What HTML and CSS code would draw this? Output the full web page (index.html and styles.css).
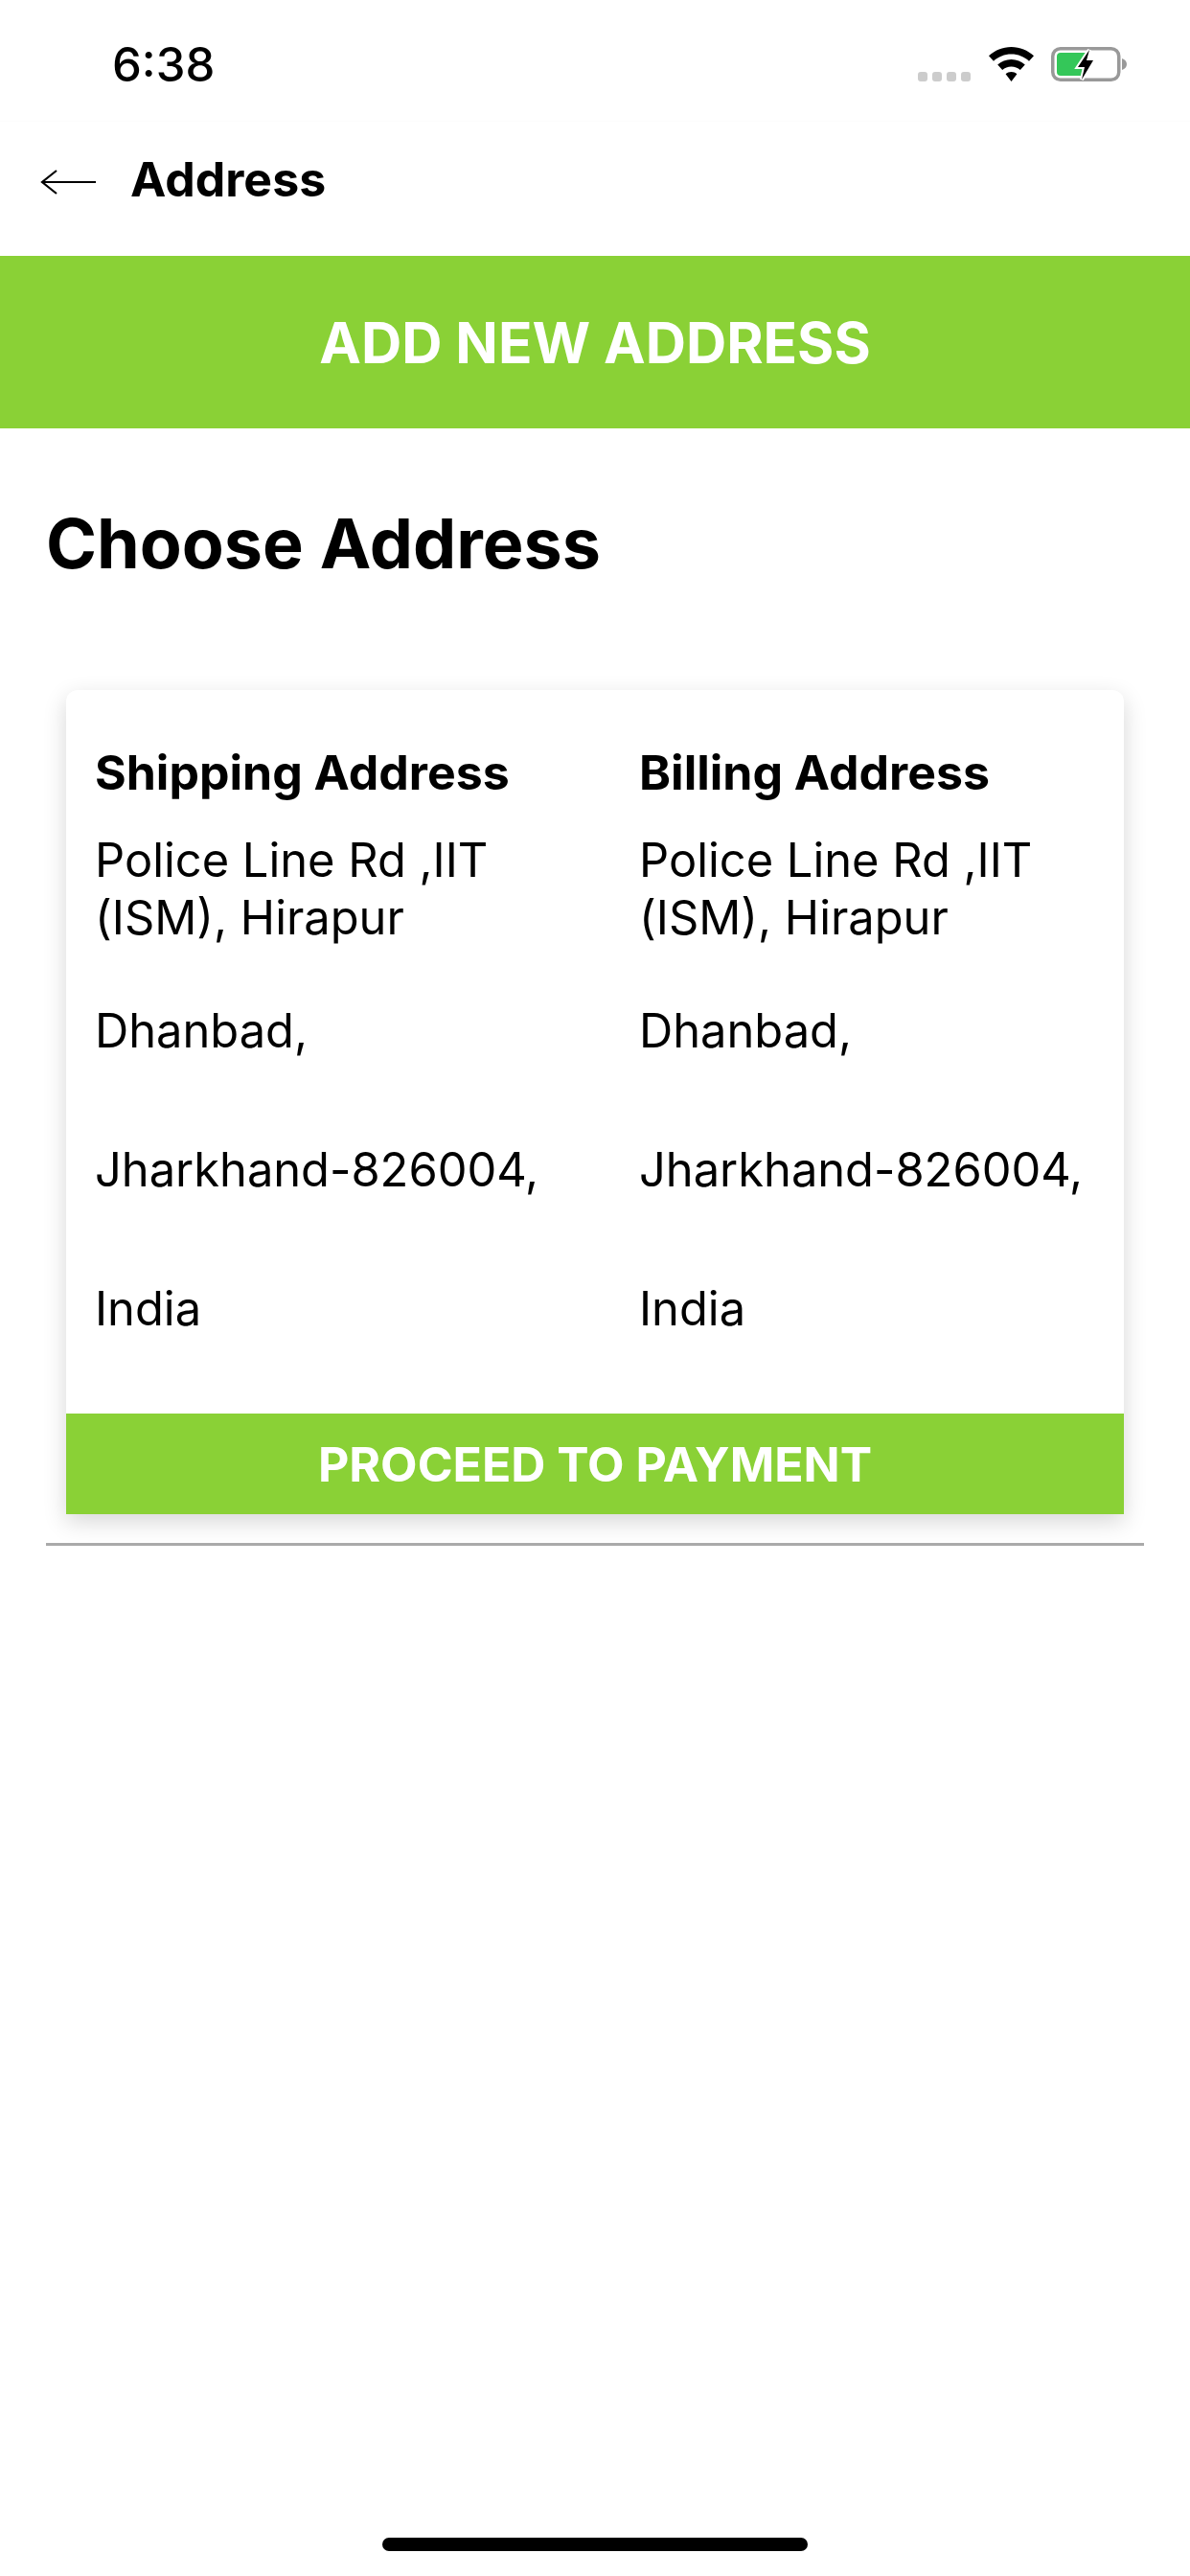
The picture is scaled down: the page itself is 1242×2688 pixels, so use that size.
FILE: index.html
```html
<!DOCTYPE html>
<html lang="en">
<head>
<meta charset="utf-8">
<title>Address</title>
<link rel="stylesheet" href="styles.css">
</head>
<body>
<div class="screen">
  <div class="status">
    <span class="time">6:38</span>
    <div class="status-icons">
      <div class="signal"><i></i><i></i><i></i><i></i></div>
      <svg class="wifi" width="47" height="36" viewBox="0 0 47 36"><path d="M23.500 0C14.500 0 6.300 3.500 0 9.300L5 14.700C10 10.200 16.400 7.500 23.500 7.500S37 10.200 42 14.700L47 9.300C40.700 3.500 32.500 0 23.500 0ZM23.500 13C18 13 13 15.100 9.200 18.500L14.200 24C16.600 21.800 19.900 20.500 23.500 20.500S30.400 21.800 32.800 24L37.800 18.500C34 15.100 29 13 23.500 13ZM23.500 26C21.200 26 19.200 26.800 17.600 28.200L23.500 36 29.400 28.200C27.800 26.800 25.800 26 23.500 26Z"/></svg>
      <svg class="battery" width="80" height="36" viewBox="0 0 80 36"><rect x="1.750" y="1.750" width="69" height="32.500" rx="8" fill="none" stroke="#999" stroke-width="3.500"/><path d="M6 10a4 4 0 0 1 4-4H36V30H10a4 4 0 0 1-4-4Z" fill="#34c759"/><path d="M74 12c3 1 5 3 5 6s-2 5-5 6Z" fill="#999"/><path d="M40 3 28 21H35L32 34 44 14H37Z" fill="#000" stroke="#fff" stroke-width="4" paint-order="stroke" stroke-linejoin="miter"/></svg>
    </div>
  </div>
  <header class="topbar">
    <svg class="back" width="58" height="26" viewBox="0 0 58 26"><path d="M58 13H2M17 1 2 13 17 25" fill="none" stroke="#000" stroke-width="2.200"/></svg>
    <h1 class="title">Address</h1>
  </header>
  <div class="add-btn">ADD NEW ADDRESS</div>
  <main class="content">
    <h2 class="heading">Choose Address</h2>
    <section class="list">
      <article class="card">
        <div class="columns">
          <div class="col">
            <h3 class="col-title">Shipping Address</h3>
            <p class="line first">Police Line Rd ,IIT (ISM), Hirapur</p>
            <p class="line">Dhanbad,</p>
            <p class="line">Jharkhand-826004,</p>
            <p class="line">India</p>
          </div>
          <div class="col">
            <h3 class="col-title">Billing Address</h3>
            <p class="line first">Police Line Rd ,IIT (ISM), Hirapur</p>
            <p class="line">Dhanbad,</p>
            <p class="line">Jharkhand-826004,</p>
            <p class="line">India</p>
          </div>
        </div>
        <div class="proceed">PROCEED TO PAYMENT</div>
      </article>
      <hr class="divider">
    </section>
  </main>
  <div class="home-bar"></div>
</div>
</body>
</html>
```
FILE: styles.css
```css
* { box-sizing: border-box; }
html, body { margin: 0; padding: 0; background: #fff; }
body { font-family: Inter, "Liberation Sans", sans-serif; color: #000; }
.screen { width: 1242px; height: 2688px; position: relative; overflow: hidden; background: #fff; }
.status { height: 126px; padding: 0 65px 0 117px; display: flex; align-items: center; justify-content: space-between; background: #fff; }
.time { font-size: 49px; font-weight: 500; line-height: 56px; position: relative; top: 5px; }
.status-icons { display: flex; align-items: flex-end; height: 36px; position: relative; top: 4px; }
.signal { display: flex; gap: 5px; margin-right: 19px; }
.signal i { width: 10px; height: 10px; background: #ccc; border-radius: 3px; }
.wifi { margin-right: 18px; }
.topbar { height: 141px; display: flex; align-items: center; padding: 0 0 14px 42px; gap: 36px; box-shadow: inset 0 1px 0 #fcfcfc; }
.title { margin: 0 0 6px; font-size: 50px; font-weight: 700; line-height: 60px; }
.back { flex: none; }
.add-btn { height: 180px; background: #8ad136; color: #fff; font-size: 58.500px; font-weight: 700; display: flex; align-items: center; justify-content: center; }
.content { padding: 0 48px; }
.heading { margin: 76px 0 0; font-size: 71.800px; font-weight: 700; line-height: 88px; }
.list { margin-top: 109px; }
.card { margin: 0 21px; background: #fff; border-radius: 12px 12px 0 0; box-shadow: 0 8px 24px rgba(0,0,0,.16); }
.columns { display: grid; grid-template-columns: 568px 1fr; padding: 56px 0 0 30px; height: 755px; }
.col-title { margin: 0; font-size: 50px; font-weight: 700; line-height: 60px; }
.line { margin: 0 0 85px; font-size: 48.800px; font-weight: 400; line-height: 60px; width: 450px; }
.line.first { margin-top: 32px; margin-bottom: 58px; }
.col .line:nth-child(3), .col .line:nth-child(4) { width: 500px; }
.proceed { height: 105px; background: #8ad136; color: #fff; font-size: 50px; font-weight: 700; display: flex; align-items: center; justify-content: center; }
.divider { margin: 30px 0 0; border: 0; height: 3px; background: #aaa; }
.home-bar { position: absolute; left: 399px; top: 2648px; width: 444px; height: 14px; border-radius: 7px; background: #000; }
```
